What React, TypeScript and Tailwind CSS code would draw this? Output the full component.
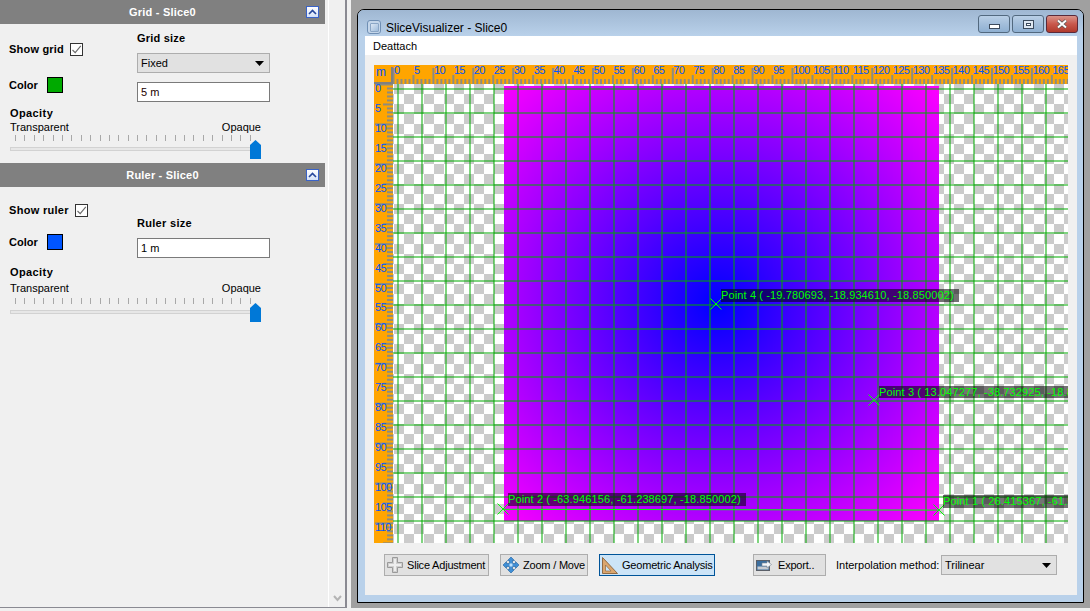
import React from "react";

const GRID_X = Array.from({ length: 28 }, (_, i) => 398 + i * 24);
const GRID_Y = Array.from({ length: 19 }, (_, i) => 89 + i * 24);
const TOP_UNITS = Array.from({ length: 170 }, (_, i) => i);
const LEFT_UNITS = Array.from({ length: 116 }, (_, i) => i);

function ChevronBtn() {
  return (
    <div className="flex h-[12px] w-[13px] items-center justify-center border border-[#3a63c8] bg-gradient-to-b from-white to-[#d5e2f8]">
      <svg width="9" height="6" viewBox="0 0 9 6">
        <path d="M1 5 L4.5 1.5 L8 5" fill="none" stroke="#27479b" strokeWidth="1.6" />
      </svg>
    </div>
  );
}

function PanelHeader({ title }: { title: string }) {
  return (
    <div className="relative flex h-[24px] items-center justify-center bg-[#808080] text-[11px] font-bold tracking-[0.2px] text-white">
      <span>{title}</span>
      <div className="absolute left-[306px] top-[6px]">
        <ChevronBtn />
      </div>
    </div>
  );
}

function CheckBox() {
  return (
    <div className="flex h-[13px] w-[13px] items-center justify-center border border-[#333] bg-white">
      <svg width="11" height="11" viewBox="0 0 11 11">
        <path d="M1.5 6 L4.2 8.7 L9.8 1.8" fill="none" stroke="#6a6a6a" strokeWidth="1.1" />
      </svg>
    </div>
  );
}

function Caret() {
  return (
    <svg width="9" height="5" viewBox="0 0 9 5">
      <path d="M0 0 H9 L4.5 5 Z" fill="#000" />
    </svg>
  );
}

function OpacitySlider({ labelGap, tickGap }: { labelGap: string; tickGap: string }) {
  return (
    <div className="flex flex-col">
      <div className="pl-[10px] text-[11px] font-bold leading-[14px] tracking-[0.4px] text-black">Opacity</div>
      <div className={`flex w-[261px] justify-between pl-[10px] text-[11px] leading-[14px] text-black ${labelGap}`}>
        <span>Transparent</span>
        <span>Opaque</span>
      </div>
      <div className={`ml-[15px] flex w-[236px] justify-between ${tickGap}`}>
        {Array.from({ length: 26 }, (_, i) => (
          <div key={i} className="h-[6px] w-px bg-[#a8a8a8]" />
        ))}
      </div>
      <div className="relative ml-[10px] mt-[6px] h-[4px] w-[246px] border border-[#d2d2d2] bg-[#e7e7e7]">
        <svg className="absolute left-[239px] top-[-8px]" width="11" height="19" viewBox="0 0 11 19">
          <path d="M0 5 L5.5 0 L11 5 V19 H0 Z" fill="#0078d7" />
        </svg>
      </div>
    </div>
  );
}

function GridSection() {
  return (
    <div className="flex h-[139px] flex-col">
      <div className="flex h-[82px] pt-[7px]">
        <div className="flex w-[137px] flex-col pl-[9px] pt-[11px]">
          <div className="flex items-center gap-[6px]">
            <span className="text-[11px] font-bold leading-[14px] tracking-[0.2px] text-black">Show grid</span>
            <CheckBox />
          </div>
          <div className="mt-[21px] flex items-center gap-[9px]">
            <span className="text-[11px] font-bold leading-[14px] text-black">Color</span>
            <div className="h-[16px] w-[16px] border border-black bg-[#00aa00]" />
          </div>
        </div>
        <div className="flex w-[133px] flex-col">
          <div className="text-[11px] font-bold leading-[14px] tracking-[0.2px] text-black">Grid size</div>
          <div className="mt-[8px] flex h-[20px] items-center justify-between border border-[#adadad] bg-[#e1e1e1] pl-[3px] pr-[5px] text-[11px] text-black">
            <span>Fixed</span>
            <Caret />
          </div>
          <div className="mt-[9px] flex h-[20px] items-center border border-[#7a7a7a] bg-white pl-[3px] text-[11px] text-[#200]">
            5 m
          </div>
        </div>
      </div>
      <OpacitySlider labelGap="" tickGap="mt-[1px]" />
    </div>
  );
}

function RulerSection() {
  return (
    <div className="flex flex-col">
      <div className="flex h-[71px] pt-[16px]">
        <div className="flex w-[137px] flex-col pl-[9px]">
          <div className="flex items-center gap-[6px]">
            <span className="text-[11px] font-bold leading-[14px] tracking-[0.3px] text-black">Show ruler</span>
            <CheckBox />
          </div>
          <div className="mt-[17px] flex items-center gap-[9px]">
            <span className="text-[11px] font-bold leading-[14px] text-black">Color</span>
            <div className="h-[16px] w-[16px] border border-black bg-[#0055ff]" />
          </div>
        </div>
        <div className="flex w-[133px] flex-col pt-[13px]">
          <div className="text-[11px] font-bold leading-[14px] tracking-[0.3px] text-black">Ruler size</div>
          <div className="mt-[8px] flex h-[20px] items-center border border-[#7a7a7a] bg-white pl-[3px] text-[11px] text-black">
            1 m
          </div>
        </div>
      </div>
      <div className="pt-[7px]">
        <OpacitySlider labelGap="mt-[2px]" tickGap="mt-[3px]" />
      </div>
    </div>
  );
}

function Sidebar() {
  return (
    <div className="flex h-[608px] w-[347px] border-b border-r-2 border-[#8a8a92] bg-[#f0f0f0]">
      <div className="w-[325px]">
        <PanelHeader title="Grid - Slice0" />
        <GridSection />
        <PanelHeader title="Ruler - Slice0" />
        <RulerSection />
      </div>
      <div className="ml-[3px] flex w-[17px] flex-col justify-end border-l border-white pb-[5px] pl-[4px]">
        <svg width="9" height="7" viewBox="0 0 9 7">
          <path d="M1 1 L4.5 5 L8 1" fill="none" stroke="#b4b4b4" strokeWidth="2" />
        </svg>
      </div>
    </div>
  );
}

function WinBtn({ kind }: { kind: "min" | "max" | "close" }) {
  if (kind === "close") {
    return (
      <div className="flex h-[18px] w-[32px] items-center justify-center rounded-[3px] border border-[#5a2a3a] bg-gradient-to-b from-[#d9938a] via-[#c9584c] to-[#b03a2c]">
        <svg width="12" height="10" viewBox="0 0 12 10">
          <path d="M2 1.5 L10 8.5 M10 1.5 L2 8.5" stroke="#555" strokeWidth="3.4" />
          <path d="M2 1.5 L10 8.5 M10 1.5 L2 8.5" stroke="#fff" strokeWidth="2" />
        </svg>
      </div>
    );
  }
  return (
    <div className="flex h-[18px] w-[32px] items-center justify-center rounded-[3px] border border-[#52697f] bg-gradient-to-b from-[#b9cfe6] via-[#a3bedb] to-[#8fb0d2]">
      {kind === "min" ? (
        <div className="mt-[4px] h-[5px] w-[11px] border border-[#3c4a5c] bg-white" />
      ) : (
        <div className="flex h-[9px] w-[11px] items-center justify-center border border-[#3c4a5c] bg-[#dfe8f2]">
          <div className="h-[3px] w-[5px] border border-[#3c4a5c] bg-white" />
        </div>
      )}
    </div>
  );
}

function TitleBar() {
  return (
    <div className="flex h-[26px] items-start justify-between rounded-t-[6px] bg-gradient-to-b from-[#9fb7d2] to-[#b9d1ea] pl-[9px] pr-[5px]">
      <div className="flex items-start gap-[5px] pt-[10px]">
        <div className="flex h-[14px] w-[14px] items-center justify-center rounded-[3px] border border-[#6f8fb4] bg-[#c4d6ea]">
          <div className="h-[9px] w-[9px] rounded-[1px] border border-[#8aa6c6] bg-gradient-to-br from-[#dbe6f3] to-[#9ebcdc]" />
        </div>
        <span className="text-[12px] leading-[16px] text-black">SliceVisualizer - Slice0</span>
      </div>
      <div className="flex gap-[2px] pt-[5px]">
        <WinBtn kind="min" />
        <WinBtn kind="max" />
        <WinBtn kind="close" />
      </div>
    </div>
  );
}

function RulerTop() {
  return (
    <div className="absolute left-[19px] top-0 h-[19px] w-[675px] overflow-hidden bg-[#ffa500]">
      <svg className="absolute inset-0" width="675" height="19">
        {TOP_UNITS.map((u) => {
          const x = u * 3.99 + 0.5;
          const h = u % 10 === 0 ? 16 : u % 5 === 0 ? 9 : 5;
          return <line key={u} x1={x} x2={x} y1={19} y2={19 - h} stroke="#8c8c80" strokeWidth="2" />;
        })}
      </svg>
      {TOP_UNITS.filter((u) => u % 5 === 0).map((u) => (
        <span
          key={u}
          className="absolute top-[-1px] text-[11px] leading-[13px] tracking-[-0.6px] text-[#0055ff]"
          style={{ left: u * 3.99 + 1 }}
        >
          {u}
        </span>
      ))}
    </div>
  );
}

function RulerLeft() {
  return (
    <div className="absolute left-0 top-[19px] h-[459px] w-[19px] overflow-hidden bg-[#ffa500]">
      <svg className="absolute inset-0" width="19" height="459">
        {LEFT_UNITS.map((u) => {
          const y = u * 3.99 + 0.5;
          const w = u % 10 === 0 ? 18 : u % 5 === 0 ? 10 : 6;
          return <line key={u} x1={19} x2={19 - w} y1={y} y2={y} stroke="#8c8c80" strokeWidth="2" />;
        })}
      </svg>
      {LEFT_UNITS.filter((u) => u % 5 === 0).map((u) => (
        <span
          key={u}
          className="absolute left-[1px] text-[11px] leading-[13px] tracking-[-0.6px] text-[#0055ff]"
          style={{ top: u * 3.99 - 2 }}
        >
          {u}
        </span>
      ))}
    </div>
  );
}

function PointLabel({ x, y, w, h, text }: { x: number; y: number; w: number; h: number; text: string }) {
  return (
    <div
      className="absolute overflow-hidden whitespace-nowrap bg-[rgba(0,0,0,0.55)] text-[11px] leading-[12px] tracking-[0.13px] text-[#00ff00]"
      style={{ left: x, top: y, width: w, height: h }}
    >
      {text}
    </div>
  );
}

function Cross({ x, y, color }: { x: number; y: number; color: string }) {
  return <path d={`M${x - 5.5} ${y - 5.5} L${x + 5.5} ${y + 5.5} M${x + 5.5} ${y - 5.5} L${x - 5.5} ${y + 5.5}`} stroke={color} strokeWidth="1" fill="none" />;
}

// offsets below are relative to the viewport at (374,65)
function Viewport() {
  return (
    <div className="relative h-[478px] w-[694px] overflow-hidden bg-white">
      <div className="absolute left-[19px] top-[19px] h-[459px] w-[675px] bg-[conic-gradient(#fff_25%,#cbcbcb_0_50%,#fff_0_75%,#cbcbcb_0)] bg-[length:20px_20px] bg-[position:1px_0]" />
      <div className="absolute left-[130px] top-[21px] h-[435px] w-[435px] bg-[radial-gradient(circle_at_49%_50%,#0000ff_0%,#ff00ff_100%)]" />
      <svg className="absolute inset-0" width="694" height="478">
        {GRID_X.map((x) => (
          <line key={x} x1={x - 374} x2={x - 374} y1={19} y2={478} stroke="#00aa00" strokeOpacity="0.5" strokeWidth="2" />
        ))}
        {GRID_Y.map((y) => (
          <line key={y} x1={19} x2={694} y1={y - 65} y2={y - 65} stroke="#00aa00" strokeOpacity="0.5" strokeWidth="2" />
        ))}
        <line x1={129} y1={444.3} x2={565} y2={445.1} stroke="#00ff00" strokeWidth="1" />
        <Cross x={342} y={239} color="#00ff00" />
        <Cross x={500} y={335} color="#00ff00" />
        <Cross x={129} y={444} color="#00ff00" />
        <Cross x={565} y={445} color="#00ff00" />
      </svg>
      <RulerTop />
      <RulerLeft />
      <div className="absolute left-0 top-0 h-[19px] w-[19px] bg-[#ffa500]">
        <span className="absolute left-[2px] top-0 text-[12px] leading-[14px] text-[#0055ff]">m</span>
        <div className="absolute bottom-0 left-0 h-[2px] w-[19px] bg-[#808080]" />
        <div className="absolute bottom-0 right-0 h-[17px] w-[2px] bg-[#808080]" />
      </div>
      <PointLabel x={347} y={224} w={238} h={13} text="Point 4 ( -19.780693, -18.934610, -18.850002)" />
      <PointLabel x={505} y={321} w={189} h={12} text="Point 3 ( 13.047277, -38.732925, -18.850002)" />
      <PointLabel x={134} y={428} w={238} h={13} text="Point 2 ( -63.946156, -61.238697, -18.850002)" />
      <PointLabel x={569} y={430} w={125} h={13} text="Point 1 ( 26.415367, -61.500000, -18.850002)" />
    </div>
  );
}

function PlusIcon() {
  return (
    <svg width="16" height="16" viewBox="0 0 16 16">
      <path d="M5.5 .5 H10.5 V5.5 H15.5 V10.5 H10.5 V15.5 H5.5 V10.5 H.5 V5.5 H5.5 Z" fill="#cfcfcf" stroke="#9a9a9a" />
      <path d="M7 2 H9 V7 H14 V9 H9 V14 H7 V9 H2 V7 H7 Z" fill="#eeeeee" />
    </svg>
  );
}

function MoveIcon() {
  return (
    <svg width="16" height="16" viewBox="0 0 16 16">
      <path d="M8 0 L11.5 3.5 H9.5 V6.5 H12.5 V4.5 L16 8 L12.5 11.5 V9.5 H9.5 V12.5 H11.5 L8 16 L4.5 12.5 H6.5 V9.5 H3.5 V11.5 L0 8 L3.5 4.5 V6.5 H6.5 V3.5 H4.5 Z" fill="#3f8fd6" stroke="#1f5f9f" strokeWidth=".6" />
      <rect x="6.5" y="6.5" width="3" height="3" fill="#bfe0fa" />
    </svg>
  );
}

function SquareIcon() {
  return (
    <svg width="16" height="17" viewBox="0 0 16 17">
      <path d="M.5 .5 L15.5 16.5 H.5 Z" fill="#dba66e" stroke="#8f6a45" />
      <path d="M3.5 8 L9 14 H3.5 Z" fill="#cce4f7" stroke="#8f6a45" strokeWidth=".7" />
    </svg>
  );
}

function ExportIcon() {
  return (
    <svg width="16" height="11" viewBox="0 0 16 11">
      <rect x=".5" y=".5" width="13" height="10" fill="#3c6f9f" stroke="#5a5f68" />
      <rect x="1.5" y="6.5" width="11" height="3" fill="#c8ccd2" />
      <path d="M6 3 H11 V1 L15.5 4.5 L11 8 V6 H6 Z" fill="#f4f7fb" stroke="#7a8592" strokeWidth=".6" />
    </svg>
  );
}

function ToolBtn({ icon, label, w, gap, active }: { icon: React.ReactNode; label: string; w: string; gap: string; active?: boolean }) {
  return (
    <div
      className={`flex h-[22px] ${w} ${gap} items-center whitespace-nowrap pl-[2px] text-[11px] tracking-[-0.2px] text-black ${
        active ? "border border-[#005499] bg-[#cce4f7]" : "border border-[#adadad] bg-[#e1e1e1]"
      }`}
    >
      {icon}
      <span>{label}</span>
    </div>
  );
}

function BottomRow() {
  return (
    <div className="mt-[11px] flex items-center pl-[19px]">
      <div className="flex gap-[11px]">
        <ToolBtn icon={<PlusIcon />} label="Slice Adjustment" w="w-[105px]" gap="gap-[4px]" />
        <ToolBtn icon={<MoveIcon />} label="Zoom / Move" w="w-[88px]" gap="gap-[4px]" />
        <ToolBtn icon={<SquareIcon />} label="Geometric Analysis" w="w-[116px]" gap="gap-[4px]" active />
      </div>
      <div className="ml-[38px]">
        <ToolBtn icon={<ExportIcon />} label="Export.." w="w-[73px]" gap="gap-[6px]" />
      </div>
      <span className="ml-[10px] w-[105px] whitespace-nowrap text-[11px] text-black">Interpolation method:</span>
      <div className="flex h-[20px] w-[116px] items-center justify-between border border-[#adadad] bg-[#e1e1e1] pl-[3px] pr-[5px] text-[11px] text-black">
        <span>Trilinear</span>
        <Caret />
      </div>
    </div>
  );
}

function VisualizerWindow() {
  return (
    <div className="flex h-[594px] w-[727px] flex-col rounded-t-[7px] border border-black bg-[#b9d1ea]">
      <TitleBar />
      <div className="flex flex-1 flex-col pb-[7px] pl-[7px] pr-[6px]">
        <div className="flex-1 bg-[#f0f0f0]">
          <div className="flex h-[19px] items-center bg-white pl-[8px] pt-[2px] text-[11px] text-black">Deattach</div>
          <div className="pl-[9px] pt-[10px]">
            <Viewport />
          </div>
          <BottomRow />
        </div>
      </div>
    </div>
  );
}

export default function App() {
  return (
    <div className="flex h-[611px] w-[1090px] overflow-hidden bg-[#f0f0f0] font-['Liberation_Sans',sans-serif]">
      <Sidebar />
      <div className="ml-[4px] h-[608px] flex-1 bg-[#a0a0a0] pl-[6px] pt-[9px]">
        <VisualizerWindow />
      </div>
    </div>
  );
}
